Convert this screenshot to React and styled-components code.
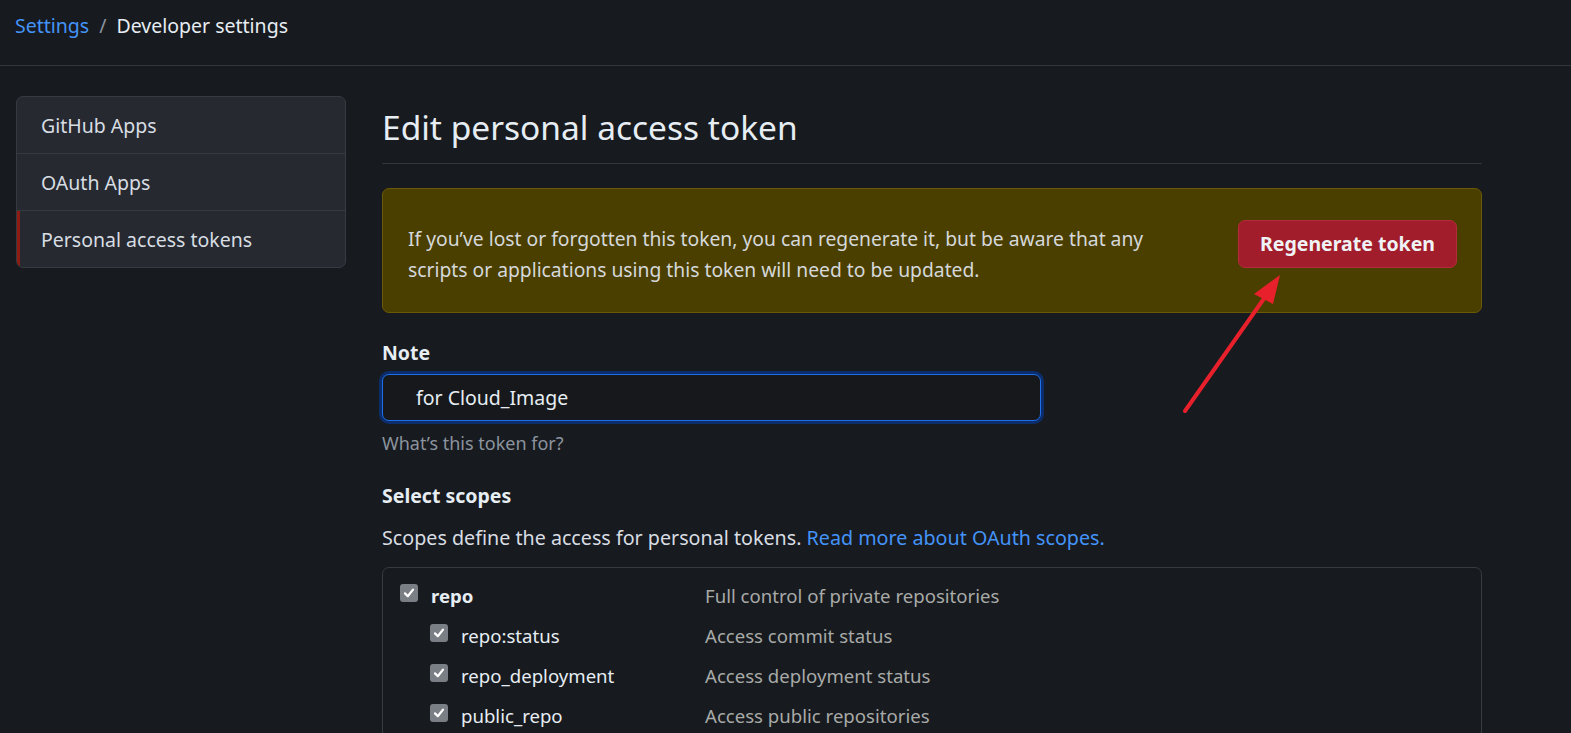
import React from "react";
import styled, { createGlobalStyle } from "styled-components";

const FONT = `"Noto Sans", "Open Sans", Lato, sans-serif`;

const GlobalStyle = createGlobalStyle`
  html, body {
    margin: 0;
    padding: 0;
    background: #171a1e;
    color: #c9d1d9;
    font-family: ${FONT};
  }
`;

const Page = styled.div`
  position: relative;
  min-height: 733px;
  overflow: hidden;
`;

const Header = styled.div`
  height: 66px;
  border-bottom: 1px solid #32373e;
  box-sizing: border-box;
  padding: 12px 15px 0;
  font-size: 19.5px;
  display: flex;
  gap: 10px;
  align-items: flex-start;
`;

const Crumb = styled.a`
  color: ${(p) => (p.$link ? "#4493f8" : "#e6edf3")};
  text-decoration: none;
`;

const Slash = styled.span`
  color: #8b949e;
`;

const Layout = styled.div`
  display: flex;
  gap: 36px;
  padding: 30px 16px 0;
`;

const Sidebar = styled.nav`
  width: 330px;
  flex-shrink: 0;
  align-self: flex-start;
  background: #262a30;
  border: 1px solid #363b42;
  border-radius: 7px;
  overflow: hidden;
  box-sizing: border-box;
`;

const NavItem = styled.div`
  height: 56px;
  display: flex;
  align-items: center;
  padding-left: 24px;
  font-size: 19.5px;
  color: #d7dde3;
  border-top: ${(p) => (p.$first ? "none" : "1px solid #363b42")};
  box-shadow: ${(p) => (p.$active ? "inset 3px 0 0 #8e1c12" : "none")};
`;

const Main = styled.main`
  width: 1100px;
`;

const Title = styled.h1`
  margin: 0;
  font-size: 33.5px;
  font-weight: 400;
  color: #e6edf3;
  padding: 8px 0 13px;
  border-bottom: 1px solid #32373e;
`;

const Flash = styled.div`
  margin-top: 24px;
  height: 125px;
  box-sizing: border-box;
  background: #4b3f00;
  border: 1px solid #6b5a05;
  border-radius: 7px;
  display: flex;
  align-items: center;
  justify-content: space-between;
  padding: 0 24px 0 25px;
`;

const FlashText = styled.p`
  margin: 6px 0 0;
  width: 775px;
  font-size: 19.3px;
  line-height: 31px;
  color: #d5d8da;
`;

const DangerButton = styled.button`
  width: 219px;
  height: 48px;
  margin-top: -14px;
  background: #a21d2b;
  border: 1px solid #b42c3a;
  border-radius: 7px;
  color: #f0f3f6;
  font-family: ${FONT};
  font-size: 19.5px;
  font-weight: 700;
`;

const Label = styled.div`
  font-size: 19.5px;
  font-weight: 700;
  color: #e6edf3;
  margin-top: ${(p) => p.$top}px;
`;

const Input = styled.div`
  margin-top: 8px;
  width: 659px;
  height: 47px;
  box-sizing: border-box;
  border: 1px solid #1f6feb;
  box-shadow: 0 0 0 3px #0c2d6b;
  border-radius: 7px;
  background: #16181b;
  display: flex;
  align-items: center;
  padding-left: 33px;
  font-size: 19.5px;
  color: #e6edf3;
`;

const Hint = styled.div`
  margin-top: 10px;
  font-size: 18px;
  color: #8b949e;
`;

const Desc = styled.p`
  margin: 15px 0 0;
  font-size: 19.7px;
  color: #d7dde3;
`;

const Link = styled.a`
  color: #4493f8;
  text-decoration: none;
`;

const ScopeBox = styled.div`
  margin-top: 16px;
  border: 1px solid #363b42;
  border-radius: 7px;
  padding: 7px 0 0 17px;
  height: 200px;
  box-sizing: border-box;
`;

const ScopeRow = styled.div`
  display: grid;
  grid-template-columns: ${(p) => (p.$sub ? "30px 31px 244px" : "31px 274px")} 1fr;
  align-items: center;
  height: 40px;
  font-size: 18.6px;
`;

const Check = styled.span`
  width: 18px;
  height: 18px;
  border-radius: 3px;
  background: #7a7f86;
  display: flex;
  align-items: center;
  justify-content: center;
  margin-top: -4px;
`;

const ScopeName = styled.span`
  color: #e6edf3;
  font-weight: ${(p) => (p.$bold ? 700 : 400)};
`;

const ScopeDesc = styled.span`
  color: #a8aaa8;
`;

const Arrow = styled.svg`
  position: absolute;
  left: 1170px;
  top: 262px;
`;

const CheckBox = () => (
  <Check>
    <svg width="12" height="12" viewBox="0 0 12 12">
      <path d="M2 6.4 L4.8 9.2 L10 2.6" fill="none" stroke="#fff" strokeWidth="2.2" strokeLinecap="round" strokeLinejoin="round" />
    </svg>
  </Check>
);

const scopes = [
  { name: "repo:status", desc: "Access commit status" },
  { name: "repo_deployment", desc: "Access deployment status" },
  { name: "public_repo", desc: "Access public repositories" },
];

const App = () => (
  <Page>
    <GlobalStyle />
    <Header>
      <Crumb $link href="#">Settings</Crumb>
      <Slash>/</Slash>
      <Crumb>Developer settings</Crumb>
    </Header>
    <Layout>
      <Sidebar>
        <NavItem $first>GitHub Apps</NavItem>
        <NavItem>OAuth Apps</NavItem>
        <NavItem $active>Personal access tokens</NavItem>
      </Sidebar>
      <Main>
        <Title>Edit personal access token</Title>
        <Flash>
          <FlashText>
            If you’ve lost or forgotten this token, you can regenerate it, but be aware that any
            scripts or applications using this token will need to be updated.
          </FlashText>
          <DangerButton>Regenerate token</DangerButton>
        </Flash>
        <Label $top={26}>Note</Label>
        <Input>for Cloud_Image</Input>
        <Hint>What’s this token for?</Hint>
        <Label $top={27}>Select scopes</Label>
        <Desc>
          Scopes define the access for personal tokens. <Link href="#">Read more about OAuth scopes.</Link>
        </Desc>
        <ScopeBox>
          <ScopeRow>
            <CheckBox />
            <ScopeName $bold>repo</ScopeName>
            <ScopeDesc>Full control of private repositories</ScopeDesc>
          </ScopeRow>
          {scopes.map((s) => (
            <ScopeRow $sub key={s.name}>
              <span />
              <CheckBox />
              <ScopeName>{s.name}</ScopeName>
              <ScopeDesc>{s.desc}</ScopeDesc>
            </ScopeRow>
          ))}
        </ScopeBox>
      </Main>
    </Layout>
    <Arrow width="130" height="160" viewBox="0 0 130 160">
      <line x1="15" y1="149" x2="100" y2="28" stroke="#e8202b" strokeWidth="4" strokeLinecap="round" />
      <polygon points="110,13 84,32 103,42" fill="#e8202b" />
    </Arrow>
  </Page>
);

export default App;
